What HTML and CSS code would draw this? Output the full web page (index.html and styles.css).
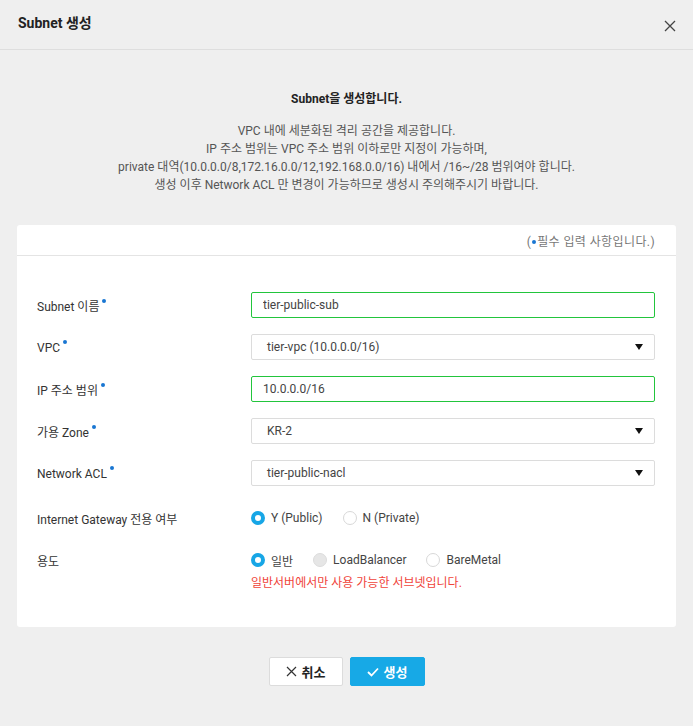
FILE: index.html
```html
<!DOCTYPE html>
<html lang="ko">
<head>
  <meta charset="UTF-8">
  <title>Subnet 생성</title>
  <link rel="stylesheet" href="styles.css">
</head>
<body>
  <div class="modal">
    <div class="modal-header">
      <h2 class="modal-title">Subnet 생성</h2>
      <button class="close-btn" aria-label="닫기">
        <svg width="12" height="12" viewBox="0 0 12 12"><path d="M1 1L11 11M11 1L1 11" stroke="#444" stroke-width="1.3" fill="none"/></svg>
      </button>
    </div>

    <div class="modal-body">
      <p class="intro-title">Subnet을 생성합니다.</p>
      <p class="intro-desc">
        VPC 내에 세분화된 격리 공간을 제공합니다.<br>
        IP 주소 범위는 VPC 주소 범위 이하로만 지정이 가능하며,<br>
        private 대역(10.0.0.0/8,172.16.0.0/12,192.168.0.0/16) 내에서 /16~/28 범위여야 합니다.<br>
        생성 이후 Network ACL 만 변경이 가능하므로 생성시 주의해주시기 바랍니다.
      </p>

      <div class="card">
        <div class="card-head">(<span class="req"></span>필수 입력 사항입니다.)</div>
        <div class="form">
          <div class="row">
            <label class="label">Subnet 이름<span class="req"></span></label>
            <input class="field field-ok" type="text" value="tier-public-sub">
          </div>
          <div class="row">
            <label class="label">VPC<span class="req"></span></label>
            <div class="field select">tier-vpc (10.0.0.0/16)<span class="caret"></span></div>
          </div>
          <div class="row">
            <label class="label">IP 주소 범위<span class="req"></span></label>
            <input class="field field-ok" type="text" value="10.0.0.0/16">
          </div>
          <div class="row">
            <label class="label">가용 Zone<span class="req"></span></label>
            <div class="field select">KR-2<span class="caret"></span></div>
          </div>
          <div class="row">
            <label class="label">Network ACL<span class="req"></span></label>
            <div class="field select">tier-public-nacl<span class="caret"></span></div>
          </div>
          <div class="row row-radio">
            <label class="label">Internet Gateway 전용 여부</label>
            <div class="radios">
              <span class="radio checked"></span><span class="radio-text">Y (Public)</span>
              <span class="radio"></span><span class="radio-text">N (Private)</span>
            </div>
          </div>
          <div class="row">
            <label class="label">용도</label>
            <div class="radios">
              <span class="radio checked"></span><span class="radio-text">일반</span>
              <span class="radio disabled"></span><span class="radio-text">LoadBalancer</span>
              <span class="radio"></span><span class="radio-text">BareMetal</span>
            </div>
          </div>
          <div class="row row-note">
            <span></span>
            <p class="warn">일반서버에서만 사용 가능한 서브넷입니다.</p>
          </div>
        </div>
      </div>

      <div class="actions">
        <button class="btn btn-cancel">
          <svg width="11" height="11" viewBox="0 0 11 11"><path d="M1 1L10 10M10 1L1 10" stroke="#333" stroke-width="1.2" fill="none"/></svg>
          취소
        </button>
        <button class="btn btn-primary">
          <svg width="12" height="10" viewBox="0 0 12 10"><path d="M1 5L4.5 8.5L11 1.5" stroke="#fff" stroke-width="1.8" fill="none"/></svg>
          생성
        </button>
      </div>
    </div>
  </div>
</body>
</html>
```

FILE: styles.css
```css
* {
  box-sizing: border-box;
}
body {
  margin: 0;
  background: #efefef;
  font-family: Roboto, "Noto Sans CJK KR", sans-serif;
  font-size: 12px;
  color: #333;
}
.modal {
  width: 693px;
  min-height: 726px;
  background: #efefef;
}
.modal-header {
  height: 50px;
  border-bottom: 1px solid #dedede;
  display: flex;
  align-items: flex-start;
  justify-content: space-between;
  padding: 0 17px 0 18px;
}
.modal-title {
  margin: 12px 0 0;
  font-size: 14px;
  font-weight: bold;
  color: #222;
}
.close-btn {
  margin-top: 20px;
  padding: 0;
  border: none;
  background: none;
  width: 12px;
  height: 12px;
  cursor: pointer;
}
.modal-body {
  padding: 0 17px;
}
.intro-title {
  margin: 40px 0 0;
  text-align: center;
  font-weight: bold;
  color: #222;
  line-height: 18px;
}
.intro-desc {
  margin: 14px 0 0;
  text-align: center;
  color: #555;
  line-height: 18px;
}
.card {
  margin-top: 31px;
  background: #fff;
  border-radius: 3px;
  padding-bottom: 31px;
}
.card-head {
  height: 31px;
  border-bottom: 1px solid #e4e4e4;
  text-align: right;
  padding: 7px 21px 0 0;
  color: #777;
  font-size: 12px;
  letter-spacing: 0.4px;
}
.card-head .req {
  vertical-align: 2px;
  margin: 0 1px;
}
.req {
  display: inline-block;
  width: 4px;
  height: 4px;
  border-radius: 50%;
  background: #1976d2;
  vertical-align: 8px;
  margin-left: 3px;
}
.form {
  padding: 36px 21px 0 20px;
}
.row {
  display: grid;
  grid-template-columns: 214px 1fr;
  align-items: center;
  min-height: 26px;
  margin-bottom: 16px;
}
.label {
  color: #333;
}
.field {
  height: 26px;
  width: 100%;
  border: 1px solid #dcdcdc;
  border-radius: 2px;
  background: #fff;
  font-family: inherit;
  font-size: 12px;
  color: #444;
  padding: 0 11px;
  outline: none;
}
.field-ok {
  border-color: #22c53c;
}
.select {
  display: flex;
  align-items: center;
  justify-content: space-between;
  padding: 0 15px;
}
.caret {
  width: 0;
  height: 0;
  border-left: 4px solid transparent;
  border-right: 4px solid transparent;
  border-top: 6px solid #111;
  margin-right: -4px;
}
.row-radio {
  margin-top: 19px;
}
.radios {
  display: flex;
  align-items: center;
}
.radio {
  width: 14px;
  height: 14px;
  border-radius: 50%;
  border: 1px solid #d8d8d8;
  background: #fff;
  margin-right: 6px;
}
.radio.checked {
  border: 4px solid #17a6e6;
  background: #fff;
}
.radio.disabled {
  background: #e6e6e6;
  border-color: #dcdcdc;
}
.radio-text {
  color: #444;
  margin-right: 20px;
}
.row-note {
  margin: -19px 0 0;
}
.warn {
  margin: 0;
  color: #f0443a;
  line-height: 18px;
}
.actions {
  display: flex;
  justify-content: center;
  gap: 7px;
  margin-top: 30px;
}
.btn {
  height: 29px;
  border-radius: 2px;
  font-family: inherit;
  font-size: 13px;
  font-weight: bold;
  display: flex;
  align-items: center;
  justify-content: center;
  gap: 5px;
  cursor: pointer;
}
.btn-cancel {
  width: 74px;
  background: #fff;
  border: 1px solid #dcdcdc;
  color: #222;
}
.btn-primary {
  width: 75px;
  background: #17a9e6;
  border: 1px solid #17a9e6;
  color: #fff;
}
```
